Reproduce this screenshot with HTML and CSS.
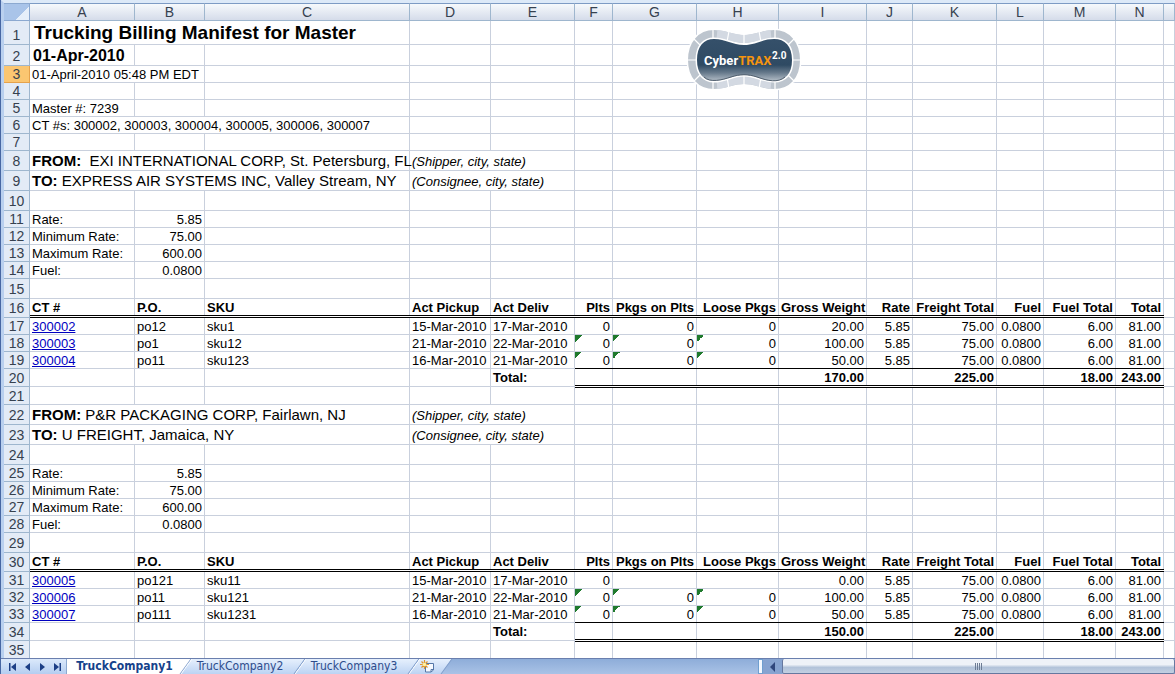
FILE: index.html
```html
<!DOCTYPE html>
<html lang="en">
<head>
<meta charset="utf-8">
<title>Trucking Billing Manifest</title>
<link rel="stylesheet" href="styles.css">
</head>
<body>
<main class="sheet">
<table class="grid">
<colgroup><col class="w-head"><col class="w-a"><col class="w-b"><col class="w-c"><col class="w-d"><col class="w-e"><col class="w-f"><col class="w-g"><col class="w-h"><col class="w-i"><col class="w-j"><col class="w-k"><col class="w-l"><col class="w-m"><col class="w-n"><col></colgroup>
<thead>
<tr><th class="corner" aria-label="Select all"></th><th>A</th><th>B</th><th>C</th><th>D</th><th>E</th><th>F</th><th>G</th><th>H</th><th>I</th><th>J</th><th>K</th><th>L</th><th>M</th><th>N</th><th></th></tr>
</thead>
<tbody>
<tr class="h-title"><th>1</th><td colspan="3" class="title">Trucking Billing Manifest for Master</td><td></td><td></td><td></td><td></td><td class="logo-cell"><svg class="logo" viewBox="0 0 116 64" width="116" height="64" role="img" aria-label="CyberTRAX 2.0">
<defs><linearGradient id="plate" x1="0" y1="0" x2="0" y2="1"><stop offset="0" stop-color="#35506a"/><stop offset=".62" stop-color="#2f4a63"/><stop offset=".8" stop-color="#66798b"/><stop offset="1" stop-color="#b4bec8"/></linearGradient></defs>
<path d="M6 32C6 16 15 6 28 6C40 6 46 11 58 11S76 6 88 6C101 6 110 16 110 32S101 57 88 57C76 57 70 52 58 52S40 57 28 57C15 57 6 48 6 32Z" fill="#fff" stroke="#fff" stroke-width="11"/>
<path d="M6 32C6 16 15 6 28 6C40 6 46 11 58 11S76 6 88 6C101 6 110 16 110 32S101 57 88 57C76 57 70 52 58 52S40 57 28 57C15 57 6 48 6 32Z" fill="#fff" stroke="#bdc5ce" stroke-width="8"/>
<path d="M31 6C41 7 47 11 58 11S75 7 85 6M31 57C41 56 47 52 58 52S75 56 85 57" fill="none" stroke="#d3d9e2" stroke-width="8"/>
<path d="M0 32H11M105 32H116M7 10L15 18M109 10L101 18M7 54L15 46M109 54L101 46M27 0V12M89 0V12M27 64V52M89 64V52M43 3L41 14M73 3L75 14M43 61L41 49M73 61L75 49M58 4V17M58 60V47" stroke="#fff" stroke-width="1.2"/>
<path d="M11 32C11 18 18 11 28 11C40 11 46 17 58 17S76 11 88 11C99 11 106 18 106 32S99 53 88 53C76 53 70 47 58 47S40 53 28 53C18 53 11 46 11 32Z" fill="url(#plate)" stroke="#fff" stroke-width="3" paint-order="stroke"/>
<path d="M18 49C24 55 36 52 45 49C54 46 62 46 71 49C82 53 92 55 99 49" fill="none" stroke="#52606f" stroke-width="1"/>
<text x="18" y="37" class="logo-text">Cyber<tspan class="logo-trax">TRAX</tspan></text><text x="86" y="31" class="logo-version">2.0</text>
</svg></td><td></td><td></td><td></td><td></td><td></td><td></td><td></td></tr>
<tr class="h-date"><th>2</th><td class="date">01-Apr-2010</td><td></td><td></td><td></td><td></td><td></td><td></td><td></td><td></td><td></td><td></td><td></td><td></td><td></td><td></td></tr>
<tr><th class="current">3</th><td colspan="2">01-April-2010 05:48 PM EDT</td><td></td><td></td><td></td><td></td><td></td><td></td><td></td><td></td><td></td><td></td><td></td><td></td><td></td></tr>
<tr><th>4</th><td></td><td></td><td></td><td></td><td></td><td></td><td></td><td></td><td></td><td></td><td></td><td></td><td></td><td></td><td></td></tr>
<tr><th>5</th><td>Master #: 7239</td><td></td><td></td><td></td><td></td><td></td><td></td><td></td><td></td><td></td><td></td><td></td><td></td><td></td><td></td></tr>
<tr><th>6</th><td colspan="3">CT #s: 300002, 300003, 300004, 300005, 300006, 300007</td><td></td><td></td><td></td><td></td><td></td><td></td><td></td><td></td><td></td><td></td><td></td><td></td></tr>
<tr><th>7</th><td></td><td></td><td></td><td></td><td></td><td></td><td></td><td></td><td></td><td></td><td></td><td></td><td></td><td></td><td></td></tr>
<tr class="h-tall"><th>8</th><td colspan="3" class="party"><b>FROM:</b>&nbsp; EXI INTERNATIONAL CORP, St. Petersburg, FL</td><td colspan="2" class="hint">(Shipper, city, state)</td><td></td><td></td><td></td><td></td><td></td><td></td><td></td><td></td><td></td><td></td></tr>
<tr class="h-tall"><th>9</th><td colspan="3" class="party"><b>TO:</b> EXPRESS AIR SYSTEMS INC, Valley Stream, NY</td><td colspan="2" class="hint">(Consignee, city, state)</td><td></td><td></td><td></td><td></td><td></td><td></td><td></td><td></td><td></td><td></td></tr>
<tr class="h-tall"><th>10</th><td></td><td></td><td></td><td></td><td></td><td></td><td></td><td></td><td></td><td></td><td></td><td></td><td></td><td></td><td></td></tr>
<tr><th>11</th><td>Rate:</td><td class="num">5.85</td><td></td><td></td><td></td><td></td><td></td><td></td><td></td><td></td><td></td><td></td><td></td><td></td><td></td></tr>
<tr><th>12</th><td>Minimum Rate:</td><td class="num">75.00</td><td></td><td></td><td></td><td></td><td></td><td></td><td></td><td></td><td></td><td></td><td></td><td></td><td></td></tr>
<tr><th>13</th><td>Maximum Rate:</td><td class="num">600.00</td><td></td><td></td><td></td><td></td><td></td><td></td><td></td><td></td><td></td><td></td><td></td><td></td><td></td></tr>
<tr><th>14</th><td>Fuel:</td><td class="num">0.0800</td><td></td><td></td><td></td><td></td><td></td><td></td><td></td><td></td><td></td><td></td><td></td><td></td><td></td></tr>
<tr class="h-tall"><th>15</th><td></td><td></td><td></td><td></td><td></td><td></td><td></td><td></td><td></td><td></td><td></td><td></td><td></td><td></td><td></td></tr>
<tr class="heads"><th>16</th><td>CT #</td><td>P.O.</td><td>SKU</td><td>Act Pickup</td><td>Act Deliv</td><td class="num">Plts</td><td class="num">Pkgs on Plts</td><td class="num">Loose Pkgs</td><td class="num">Gross Weight</td><td class="num">Rate</td><td class="num">Freight Total</td><td class="num">Fuel</td><td class="num">Fuel Total</td><td class="num">Total</td><td></td></tr>
<tr><th>17</th><td><a href="#300002">300002</a></td><td>po12</td><td>sku1</td><td>15-Mar-2010</td><td>17-Mar-2010</td><td class="num">0</td><td class="num">0</td><td class="num">0</td><td class="num">20.00</td><td class="num">5.85</td><td class="num">75.00</td><td class="num">0.0800</td><td class="num">6.00</td><td class="num">81.00</td><td></td></tr>
<tr><th>18</th><td><a href="#300003">300003</a></td><td>po1</td><td>sku12</td><td>21-Mar-2010</td><td>22-Mar-2010</td><td class="num flag">0</td><td class="num flag">0</td><td class="num flag">0</td><td class="num">100.00</td><td class="num">5.85</td><td class="num">75.00</td><td class="num">0.0800</td><td class="num">6.00</td><td class="num">81.00</td><td></td></tr>
<tr class="last"><th>19</th><td><a href="#300004">300004</a></td><td>po11</td><td>sku123</td><td>16-Mar-2010</td><td>21-Mar-2010</td><td class="num flag">0</td><td class="num flag">0</td><td class="num flag">0</td><td class="num">50.00</td><td class="num">5.85</td><td class="num">75.00</td><td class="num">0.0800</td><td class="num">6.00</td><td class="num">81.00</td><td></td></tr>
<tr class="totals"><th>20</th><td></td><td></td><td></td><td></td><td>Total:</td><td class="num"></td><td class="num"></td><td class="num"></td><td class="num">170.00</td><td class="num"></td><td class="num">225.00</td><td class="num"></td><td class="num">18.00</td><td class="num">243.00</td><td></td></tr>
<tr class="h-gap"><th>21</th><td></td><td></td><td></td><td></td><td></td><td></td><td></td><td></td><td></td><td></td><td></td><td></td><td></td><td></td><td></td></tr>
<tr class="h-tall"><th>22</th><td colspan="3" class="party"><b>FROM:</b> P&amp;R PACKAGING CORP, Fairlawn, NJ</td><td colspan="2" class="hint">(Shipper, city, state)</td><td></td><td></td><td></td><td></td><td></td><td></td><td></td><td></td><td></td><td></td></tr>
<tr class="h-tall"><th>23</th><td colspan="3" class="party"><b>TO:</b> U FREIGHT, Jamaica, NY</td><td colspan="2" class="hint">(Consignee, city, state)</td><td></td><td></td><td></td><td></td><td></td><td></td><td></td><td></td><td></td><td></td></tr>
<tr class="h-tall"><th>24</th><td></td><td></td><td></td><td></td><td></td><td></td><td></td><td></td><td></td><td></td><td></td><td></td><td></td><td></td><td></td></tr>
<tr><th>25</th><td>Rate:</td><td class="num">5.85</td><td></td><td></td><td></td><td></td><td></td><td></td><td></td><td></td><td></td><td></td><td></td><td></td><td></td></tr>
<tr><th>26</th><td>Minimum Rate:</td><td class="num">75.00</td><td></td><td></td><td></td><td></td><td></td><td></td><td></td><td></td><td></td><td></td><td></td><td></td><td></td></tr>
<tr><th>27</th><td>Maximum Rate:</td><td class="num">600.00</td><td></td><td></td><td></td><td></td><td></td><td></td><td></td><td></td><td></td><td></td><td></td><td></td><td></td></tr>
<tr><th>28</th><td>Fuel:</td><td class="num">0.0800</td><td></td><td></td><td></td><td></td><td></td><td></td><td></td><td></td><td></td><td></td><td></td><td></td><td></td></tr>
<tr class="h-tall"><th>29</th><td></td><td></td><td></td><td></td><td></td><td></td><td></td><td></td><td></td><td></td><td></td><td></td><td></td><td></td><td></td></tr>
<tr class="heads"><th>30</th><td>CT #</td><td>P.O.</td><td>SKU</td><td>Act Pickup</td><td>Act Deliv</td><td class="num">Plts</td><td class="num">Pkgs on Plts</td><td class="num">Loose Pkgs</td><td class="num">Gross Weight</td><td class="num">Rate</td><td class="num">Freight Total</td><td class="num">Fuel</td><td class="num">Fuel Total</td><td class="num">Total</td><td></td></tr>
<tr><th>31</th><td><a href="#300005">300005</a></td><td>po121</td><td>sku11</td><td>15-Mar-2010</td><td>17-Mar-2010</td><td class="num">0</td><td class="num"></td><td class="num"></td><td class="num">0.00</td><td class="num">5.85</td><td class="num">75.00</td><td class="num">0.0800</td><td class="num">6.00</td><td class="num">81.00</td><td></td></tr>
<tr><th>32</th><td><a href="#300006">300006</a></td><td>po11</td><td>sku121</td><td>21-Mar-2010</td><td>22-Mar-2010</td><td class="num flag">0</td><td class="num flag">0</td><td class="num flag">0</td><td class="num">100.00</td><td class="num">5.85</td><td class="num">75.00</td><td class="num">0.0800</td><td class="num">6.00</td><td class="num">81.00</td><td></td></tr>
<tr class="last"><th>33</th><td><a href="#300007">300007</a></td><td>po111</td><td>sku1231</td><td>16-Mar-2010</td><td>21-Mar-2010</td><td class="num flag">0</td><td class="num flag">0</td><td class="num flag">0</td><td class="num">50.00</td><td class="num">5.85</td><td class="num">75.00</td><td class="num">0.0800</td><td class="num">6.00</td><td class="num">81.00</td><td></td></tr>
<tr class="totals"><th>34</th><td></td><td></td><td></td><td></td><td>Total:</td><td class="num"></td><td class="num"></td><td class="num"></td><td class="num">150.00</td><td class="num"></td><td class="num">225.00</td><td class="num"></td><td class="num">18.00</td><td class="num">243.00</td><td></td></tr>
<tr class="h-gap"><th>35</th><td></td><td></td><td></td><td></td><td></td><td></td><td></td><td></td><td></td><td></td><td></td><td></td><td></td><td></td><td></td></tr>
</tbody>
</table>
</main>
<footer class="bar">
<nav class="tabs">
<div class="steps">
<button type="button" aria-label="First sheet"><svg viewBox="0 0 8 8" width="8" height="8"><path d="M0 0H1.5V8H0ZM7 0V8L2 4Z"/></svg></button>
<button type="button" aria-label="Previous sheet"><svg viewBox="0 0 8 8" width="8" height="8"><path d="M6 0V8L1 4Z"/></svg></button>
<button type="button" aria-label="Next sheet"><svg viewBox="0 0 8 8" width="8" height="8"><path d="M2 0V8L7 4Z"/></svg></button>
<button type="button" aria-label="Last sheet"><svg viewBox="0 0 8 8" width="8" height="8"><path d="M1 0V8L6 4ZM6.500 0H8V8H6.500Z"/></svg></button>
</div>
<button type="button" class="tab active">TruckCompany1</button>
<button type="button" class="tab">TruckCompany2</button>
<button type="button" class="tab">TruckCompany3</button>
<button type="button" class="tab add" aria-label="Insert worksheet"><svg viewBox="0 0 16 13" width="16" height="13"><path d="M5.500 3.500H13.500V10L11 12H5.500Z" fill="#f7faff" stroke="#5577a8"/><path d="M13.500 9.500H11V12" fill="none" stroke="#5577a8"/><path d="M4.500 0V9M0 4.500H9M1.500 1.500L7.500 7.500M7.500 1.500L1.500 7.500" stroke="#e0952c" stroke-width="1.200"/><circle cx="4.500" cy="4.500" r="1.800" fill="#fff2a0"/></svg></button>
</nav>
<div class="scroll">
<span class="splitter"></span>
<button type="button" class="arrow" aria-label="Scroll left"><svg viewBox="0 0 6 10" width="6" height="10"><path d="M5 0V10L0 5Z"/></svg></button>
<div class="thumb"><i></i><i></i><i></i><i></i></div>
</div>
</footer>
</body>
</html>
```
FILE: styles.css
```css
*, *::before, *::after { box-sizing: border-box; }
body {
  margin: 0;
  height: 100vh;
  display: flex;
  flex-direction: column;
  overflow: hidden;
  font: 13px/15px "Liberation Sans", Arial, sans-serif;
  color: #000;
  background: #fff;
  border-left: 1px solid #4767a3;
}
.sheet {
  flex: 1;
  min-height: 0;
  overflow: hidden;
  border-left: 3px solid #b9d0ef;
  border-top: 3px solid #dce9f8;
}
.grid {
  width: 100%;
  table-layout: fixed;
  border-collapse: separate;
  border-spacing: 0;
}
.w-head { width: 26px; }
.w-a { width: 105px; }
.w-b { width: 70px; }
.w-c { width: 205px; }
.w-d { width: 81px; }
.w-e { width: 84px; }
.w-f { width: 38px; }
.w-g { width: 84px; }
.w-h { width: 82px; }
.w-i { width: 88px; }
.w-j { width: 46px; }
.w-k { width: 84px; }
.w-l { width: 47px; }
.w-m { width: 72px; }
.w-n { width: 48px; }

.grid th, .grid td {
  height: 17px;
  padding: 0 2px;
  white-space: nowrap;
  text-align: left;
  vertical-align: bottom;
  border: 0 solid #c9d0dd;
  border-width: 0 1px 1px 0;
}
.grid th {
  padding: 0;
  font-size: 14px;
  line-height: 16px;
  font-weight: 400;
  text-align: center;
  color: #36414f;
  background: #e3ebf6;
  border-color: #9eb6ce;
}
.grid thead th {
  height: 18px;
  vertical-align: middle;
  border-top: 1px solid #7d9bc4;
  background: linear-gradient(#f6f9fc, #d5dcea);
}
.grid thead .corner { background: linear-gradient(135deg, #a9c4e9 66%, #e6effa 66%); border-color: #8ca9d0; }
.grid .current { background: #fbc671; border-color: #e5a24c; }

.grid .h-title > * { height: 24px; }
.grid .h-date > * { height: 21px; }
.grid .h-tall > * { height: 20px; }
.grid .h-gap > *, .grid .totals > * { height: 18px; }
.grid .heads > * { height: 19px; }
.h-title th, .h-date th, .h-tall th, .heads th { line-height: 18px; }
.grid .title { font-size: 19px; line-height: 22px; font-weight: 700; padding-left: 4px; }
.grid .date { font-size: 16px; line-height: 18px; font-weight: 700; padding-left: 3px; }
.party { font-size: 15px; line-height: 18px; }
.hint { font-style: italic; line-height: 17px; }
.grid .num { text-align: right; }
.flag { background: linear-gradient(135deg, #1f7a2d 50%, transparent 50%) 0 0 / 7px 7px no-repeat; }
a { color: #0000c0; }

.heads td, .totals td { font-weight: 700; }
.grid .heads td { padding-bottom: 2px; }
.totals td { line-height: 16px; }

/* accounting rules drawn unbroken across the cell borders */
.heads td, .totals .num, .last .num { position: relative; }
.heads td:not(:last-child)::after,
.totals .num::after,
.last .num::after {
  content: "";
  position: absolute;
  left: 0;
  right: -1px;
  bottom: -1px;
  border-top: 1px solid #000;
}
.heads td:not(:last-child)::after,
.totals .num::after {
  height: 3px;
  border-bottom: 1px solid #000;
  background: #fff;
}
.totals .num::after { bottom: -2px; }

.logo-cell { position: relative; }
.logo { position: absolute; left: -11px; top: 7px; }
.logo-text { font: 700 13px Roboto, sans-serif; fill: #fff; }
.logo-trax { fill: #f5940f; }
.logo-version { font: 700 10px Roboto, sans-serif; fill: #fff; }

.bar {
  height: 16px;
  display: flex;
  border-top: 1px solid #6a7fae;
  background: linear-gradient(#8eadd9, #a9c2e6);
}
.tabs { flex: 757; min-width: 0; display: flex; overflow: hidden; }
.bar button { margin: 0; padding: 0; border: 0; background: none; }
.steps {
  position: relative;
  z-index: 1;
  width: 66px;
  flex: none;
  display: flex;
  align-items: center;
  justify-content: space-between;
  padding: 0 5px 0 8px;
  border-right: 1px solid #8ca9d0;
  background: linear-gradient(#dbe9fb, #b4cdf0);
}
.steps button { display: flex; fill: #1c3f86; }
.bar .tab {
  position: relative;
  z-index: 0;
  flex: none;
  width: 114px;
  padding-right: 6px;
  font: 12px/15px "DejaVu Sans Condensed", "DejaVu Sans", sans-serif;
  color: #2d4c8c;
}
.tab::before {
  content: "";
  position: absolute;
  z-index: -1;
  inset: 0;
  transform: skewX(-36deg);
  background: linear-gradient(#e6f0fd, #bcd3f3);
  border-right: 1px solid #7f9cc9;
  box-shadow: inset 1px 0 #fff;
}
.bar .active { width: 119px; padding-right: 4px; font-weight: 700; color: #15428b; }
.active::before { background: #fff; box-shadow: -12px 0 #fff; }
.bar .add { width: 33px; display: flex; align-items: center; justify-content: center; }
.scroll { flex: 417; display: flex; }
.splitter { width: 5px; background: #f4f9ff; border: 1px solid #6f9fd0; }
.bar .arrow { width: 19px; display: flex; align-items: center; justify-content: center; fill: #2f477c; background: #86a3d0; }
.thumb {
  flex: 1;
  display: flex;
  align-items: center;
  justify-content: center;
  gap: 1px;
  border: 1px solid #66789f;
  border-top: 0;
  border-radius: 2px;
  background: linear-gradient(#eef2f8 40%, #b2c3da 60%, #c3d0e2);
}
.thumb i { width: 1px; height: 7px; background: #6d7c94; }
```
